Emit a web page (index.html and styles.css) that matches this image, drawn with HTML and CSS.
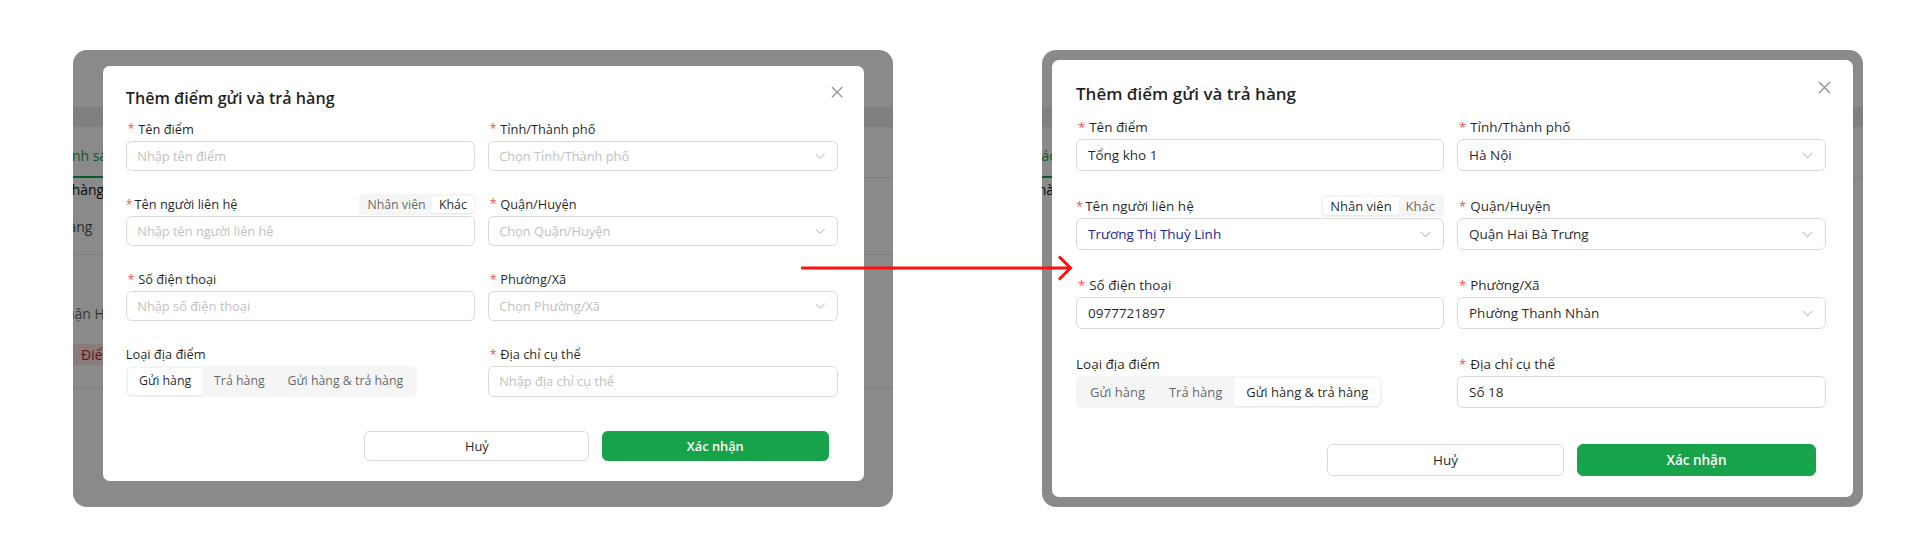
FILE: index.html
```html
<!DOCTYPE html>
<html lang="vi">
<head>
<meta charset="utf-8">
<title>Thêm điểm gửi và trả hàng</title>
<link rel="stylesheet" href="styles.css">
</head>
<body>
<div class="stage">

  <div class="frame">
    <div class="page page-l">
      <div class="pg-band"></div>
      <div class="pg-tabs"><span class="pg-tab pg-tab-l">Danh sách điểm</span></div>
      <div class="pg-sub pg-sub-l">Gửi hàng</div>
      <div class="pg-muted pg-muted-l">Trả hàng</div>
      <div class="pg-line"></div>
      <div class="pg-addr">Quận Hai Bà Trưng</div>
      <div class="pg-tag"><span>Điểm gửi</span></div>
      <div class="pg-line"></div>
    </div>
    <div class="mask"></div>
    <div class="slot slot-l">
      <div class="modal modal-l">
        <span class="modal-close"><svg width="13" height="13" viewBox="0 0 13 13"><path d="M1 1L12 12M12 1L1 12" stroke="#8f8f8f" stroke-width="1.3" fill="none"/></svg></span>
        <div class="modal-title">Thêm điểm gửi và trả hàng</div>
        <div class="form-grid">
          <div class="form-item">
            <div class="form-label"><span class="req">*</span>Tên điểm</div>
            <div class="input"><span class="ph">Nhập tên điểm</span></div>
          </div>
          <div class="form-item">
            <div class="form-label"><span class="req">*</span>Tỉnh/Thành phố</div>
            <div class="input select"><span class="ph">Chọn Tỉnh/Thành phố</span><svg class="chev" width="11" height="7" viewBox="0 0 11 7"><path d="M0.8 0.8L5.5 5.6L10.2 0.8" stroke="#c4c4c4" stroke-width="1.1" fill="none"/></svg></div>
          </div>
          <div class="form-item">
            <div class="form-label form-label-split"><span><span class="req req-tight">*</span>Tên người liên hệ</span>
              <span class="seg seg-sm"><span class="seg-item">Nhân viên</span><span class="seg-item active">Khác</span></span>
            </div>
            <div class="input"><span class="ph">Nhập tên người liên hệ</span></div>
          </div>
          <div class="form-item">
            <div class="form-label"><span class="req">*</span>Quận/Huyện</div>
            <div class="input select"><span class="ph">Chọn Quận/Huyện</span><svg class="chev" width="11" height="7" viewBox="0 0 11 7"><path d="M0.8 0.8L5.5 5.6L10.2 0.8" stroke="#c4c4c4" stroke-width="1.1" fill="none"/></svg></div>
          </div>
          <div class="form-item">
            <div class="form-label"><span class="req">*</span>Số điện thoại</div>
            <div class="input"><span class="ph">Nhập số điện thoại</span></div>
          </div>
          <div class="form-item">
            <div class="form-label"><span class="req">*</span>Phường/Xã</div>
            <div class="input select"><span class="ph">Chọn Phường/Xã</span><svg class="chev" width="11" height="7" viewBox="0 0 11 7"><path d="M0.8 0.8L5.5 5.6L10.2 0.8" stroke="#c4c4c4" stroke-width="1.1" fill="none"/></svg></div>
          </div>
          <div class="form-item">
            <div class="form-label">Loại địa điểm</div>
            <div class="seg seg-lg"><span class="seg-item active">Gửi hàng</span><span class="seg-item">Trả hàng</span><span class="seg-item">Gửi hàng &amp; trả hàng</span></div>
          </div>
          <div class="form-item">
            <div class="form-label"><span class="req">*</span>Địa chỉ cụ thể</div>
            <div class="input"><span class="ph">Nhập địa chỉ cụ thể</span></div>
          </div>
        </div>
        <div class="modal-footer">
          <button class="btn btn-cancel">Huỷ</button>
          <button class="btn btn-primary">Xác nhận</button>
        </div>
      </div>
    </div>
  </div>

  <div class="frame frame-r">
    <div class="page page-r">
      <div class="pg-band"></div>
      <div class="pg-tabs"><span class="pg-tab pg-tab-r">Danh sách</span></div>
      <div class="pg-sub pg-sub-r">Gửi hàng</div>
    </div>
    <div class="mask"></div>
    <div class="slot slot-r">
      <div class="modal">
        <span class="modal-close"><svg width="13" height="13" viewBox="0 0 13 13"><path d="M1 1L12 12M12 1L1 12" stroke="#8f8f8f" stroke-width="1.3" fill="none"/></svg></span>
        <div class="modal-title">Thêm điểm gửi và trả hàng</div>
        <div class="form-grid">
          <div class="form-item">
            <div class="form-label"><span class="req">*</span>Tên điểm</div>
            <div class="input"><span class="val">Tổng kho 1</span></div>
          </div>
          <div class="form-item">
            <div class="form-label"><span class="req">*</span>Tỉnh/Thành phố</div>
            <div class="input select"><span class="val">Hà Nội</span><svg class="chev" width="11" height="7" viewBox="0 0 11 7"><path d="M0.8 0.8L5.5 5.6L10.2 0.8" stroke="#c4c4c4" stroke-width="1.1" fill="none"/></svg></div>
          </div>
          <div class="form-item">
            <div class="form-label form-label-split"><span><span class="req req-tight">*</span>Tên người liên hệ</span>
              <span class="seg seg-sm"><span class="seg-item active">Nhân viên</span><span class="seg-item">Khác</span></span>
            </div>
            <div class="input select"><span class="val val-blue">Trương Thị Thuỳ Linh</span><svg class="chev" width="11" height="7" viewBox="0 0 11 7"><path d="M0.8 0.8L5.5 5.6L10.2 0.8" stroke="#c4c4c4" stroke-width="1.1" fill="none"/></svg></div>
          </div>
          <div class="form-item">
            <div class="form-label"><span class="req">*</span>Quận/Huyện</div>
            <div class="input select"><span class="val">Quận Hai Bà Trưng</span><svg class="chev" width="11" height="7" viewBox="0 0 11 7"><path d="M0.8 0.8L5.5 5.6L10.2 0.8" stroke="#c4c4c4" stroke-width="1.1" fill="none"/></svg></div>
          </div>
          <div class="form-item">
            <div class="form-label"><span class="req">*</span>Số điện thoại</div>
            <div class="input"><span class="val">0977721897</span></div>
          </div>
          <div class="form-item">
            <div class="form-label"><span class="req">*</span>Phường/Xã</div>
            <div class="input select"><span class="val">Phường Thanh Nhàn</span><svg class="chev" width="11" height="7" viewBox="0 0 11 7"><path d="M0.8 0.8L5.5 5.6L10.2 0.8" stroke="#c4c4c4" stroke-width="1.1" fill="none"/></svg></div>
          </div>
          <div class="form-item">
            <div class="form-label">Loại địa điểm</div>
            <div class="seg seg-lg"><span class="seg-item">Gửi hàng</span><span class="seg-item">Trả hàng</span><span class="seg-item active">Gửi hàng &amp; trả hàng</span></div>
          </div>
          <div class="form-item">
            <div class="form-label"><span class="req">*</span>Địa chỉ cụ thể</div>
            <div class="input"><span class="val">Số 18</span></div>
          </div>
        </div>
        <div class="modal-footer">
          <button class="btn btn-cancel">Huỷ</button>
          <button class="btn btn-primary">Xác nhận</button>
        </div>
      </div>
    </div>
  </div>

  <svg class="arrow" width="274" height="28" viewBox="0 0 274 28">
    <path d="M0 14H270" stroke="#ff1010" stroke-width="3" fill="none"/>
    <path d="M258 2.5L269.5 14L258 25.5" stroke="#ff1010" stroke-width="3" fill="none"/>
  </svg>
</div>
</body>
</html>
```

FILE: styles.css
```css
* { box-sizing: border-box; }

html, body {
  margin: 0;
  padding: 0;
  background: #ffffff;
}

body {
  font-family: "Open Sans", "Noto Sans", sans-serif;
  color: rgba(0, 0, 0, 0.88);
}

.stage {
  position: relative;
  display: flex;
  align-items: flex-start;
  gap: 149px;
  padding: 50px 0 0 73px;
  height: 551px;
}

.frame {
  position: relative;
  flex: none;
  width: 820px;
  height: 457px;
  border-radius: 14px;
  overflow: hidden;
  background: #ffffff;
}

.frame-r { width: 821px; }

/* underlying page, seen through the mask */
.page {
  display: flex;
  flex-direction: column;
  align-items: flex-start;
  padding-top: 57px;
  font-size: 14px;
  color: #333;
}

.pg-band {
  align-self: stretch;
  height: 20px;
  background: #ececec;
}

.pg-tabs {
  align-self: stretch;
  height: 51px;
  display: flex;
  align-items: flex-end;
  border-bottom: 1px solid #e6e6e6;
}

.pg-tab {
  padding-bottom: 10px;
  margin-bottom: -1px;
  border-bottom: 2px solid #16a34a;
  color: #16a34a;
  white-space: nowrap;
  line-height: 20px;
}

.pg-tab-l { margin-left: -19px; padding-right: 10px; }
.pg-tab-r { margin-left: -46px; padding-right: 10px; }

.pg-sub {
  margin-top: 2px;
  line-height: 20px;
  white-space: nowrap;
  color: #111;
}

.pg-sub-l { margin-left: -28px; }
.pg-sub-r { margin-left: -31px; }

.pg-muted {
  margin-top: 17px;
  line-height: 20px;
  margin-left: -38px;
  color: #555;
  white-space: nowrap;
}

.pg-line {
  align-self: stretch;
  margin-top: 17px;
  height: 1px;
  background: #e8e8e8;
}

.pg-addr {
  margin-top: 49px;
  line-height: 20px;
  margin-left: -18px;
  color: #666;
  white-space: nowrap;
}

.pg-tag {
  margin-top: 20px;
  width: 110px;
  height: 21px;
  display: flex;
  align-items: center;
  background: #fbe6e6;
  padding-left: 8px;
  color: #c81e1e;
  white-space: nowrap;
  line-height: 20px;
}

.pg-tag + .pg-line { margin-top: 23px; }

.mask {
  position: absolute;
  inset: 0;
  background: rgba(0, 0, 0, 0.46);
}

.slot { position: absolute; }
.slot-l { left: 30px; top: 16px; }
.slot-r { left: 10px; top: 10px; }

/* modal */
.modal {
  position: relative;
  width: 801px;
  height: 437px;
  background: #ffffff;
  border-radius: 7px;
  padding: 20px 27px 20px 24px;
  display: flex;
  flex-direction: column;
}

.modal-l { zoom: 0.95; }

.modal-close {
  position: absolute;
  top: 21px;
  right: 22px;
  width: 13px;
  height: 13px;
  display: flex;
}

.modal-title {
  height: 28px;
  line-height: 28px;
  font-size: 17px;
  font-weight: 600;
  color: rgba(0, 0, 0, 0.88);
  margin-bottom: 7px;
}

.form-grid {
  display: grid;
  grid-template-columns: 368px 369px;
  column-gap: 13px;
}

.form-item {
  display: flex;
  flex-direction: column;
  margin-bottom: 23px;
}

.form-label {
  height: 24px;
  line-height: 24px;
  font-size: 13.5px;
  display: flex;
  align-items: center;
  color: rgba(0, 0, 0, 0.88);
  white-space: nowrap;
}

.form-label-split {
  justify-content: space-between;
}

.req {
  color: #ff4d4f;
  font-size: 13px;
  margin: 0 4px 0 2px;
  line-height: 1;
}

.req-tight { margin: 0 2px 0 0; }

.input {
  height: 32px;
  border: 1px solid #d9d9d9;
  border-radius: 6px;
  padding: 0 11px;
  display: flex;
  align-items: center;
  font-size: 13.5px;
  background: #fff;
}

.select { justify-content: space-between; padding-right: 12px; }

.ph { color: #bfbfbf; }

.val { color: rgba(0, 0, 0, 0.88); }

.val-blue { color: #1a2696; }

.chev { flex: none; }

/* segmented */
.seg {
  display: flex;
  background: #f5f5f5;
  padding: 2px;
  white-space: nowrap;
}

.seg-item {
  color: rgba(0, 0, 0, 0.62);
}

.seg-item.active {
  background: #ffffff;
  color: rgba(0, 0, 0, 0.88);
  box-shadow: 0 1px 2px rgba(0, 0, 0, 0.06);
}

.seg-sm {
  height: 22px;
  border-radius: 4px;
  font-size: 13px;
}

.seg-sm .seg-item {
  line-height: 18px;
  padding: 0 7px;
  border-radius: 3px;
}

.seg-lg {
  align-self: flex-start;
  height: 32px;
  border-radius: 6px;
  font-size: 13px;
}

.seg-lg .seg-item {
  line-height: 28px;
  padding: 0 12px;
  border-radius: 4px;
}

/* footer */
.modal-footer {
  margin-top: 13px;
  display: flex;
  justify-content: flex-end;
  gap: 13px;
  padding-right: 10px;
}

.btn {
  height: 32px;
  border-radius: 6px;
  font-family: inherit;
  font-size: 13.5px;
  cursor: pointer;
}

.btn-cancel {
  width: 237px;
  background: #ffffff;
  border: 1px solid #d9d9d9;
  color: rgba(0, 0, 0, 0.88);
}

.btn-primary {
  width: 239px;
  background: #17a34a;
  border: 1px solid #17a34a;
  color: #ffffff;
  font-weight: 600;
}

.arrow {
  position: absolute;
  left: 801px;
  top: 254px;
}
```
